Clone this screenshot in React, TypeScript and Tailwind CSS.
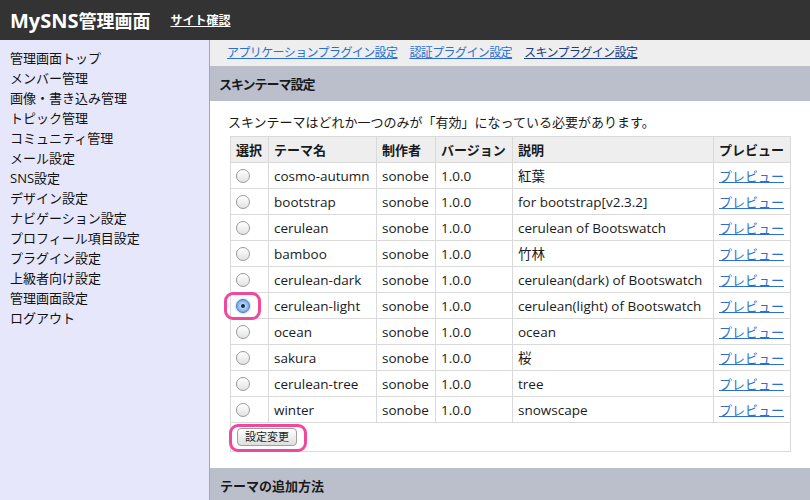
import React from "react";

const F = "font-['Open_Sans','Noto_Sans_CJK_JP',sans-serif]";

const menu = [
  "管理画面トップ",
  "メンバー管理",
  "画像・書き込み管理",
  "トピック管理",
  "コミュニティ管理",
  "メール設定",
  "SNS設定",
  "デザイン設定",
  "ナビゲーション設定",
  "プロフィール項目設定",
  "プラグイン設定",
  "上級者向け設定",
  "管理画面設定",
  "ログアウト",
];

const rows = [
  ["cosmo-autumn", "紅葉"],
  ["bootstrap", "for bootstrap[v2.3.2]"],
  ["cerulean", "cerulean of Bootswatch"],
  ["bamboo", "竹林"],
  ["cerulean-dark", "cerulean(dark) of Bootswatch"],
  ["cerulean-light", "cerulean(light) of Bootswatch"],
  ["ocean", "ocean"],
  ["sakura", "桜"],
  ["cerulean-tree", "tree"],
  ["winter", "snowscape"],
];

function Radio({ checked }: { checked?: boolean }) {
  if (checked) {
    return (
      <span className="relative inline-flex h-[14px] w-[14px] items-center justify-center rounded-full border border-[#4a7fc0] bg-[radial-gradient(circle,#eaf3ff_0%,#9cc4f2_45%,#4d8fe0_100%)] shadow-[0_0_2px_#6aa0e8]">
        <span className="block h-[4px] w-[4px] rounded-full bg-[#1a2a40]" />
      </span>
    );
  }
  return (
    <span className="inline-block h-[14px] w-[14px] rounded-full border border-[#9a9a9a] bg-[linear-gradient(#ffffff,#e2e2e2)] shadow-[inset_0_1px_1px_rgba(255,255,255,0.9)]" />
  );
}

export default function App() {
  const cell = "border border-[#dadada] h-[26px] px-[5px] py-0 align-middle whitespace-nowrap overflow-visible";
  return (
    <div className={`w-[810px] h-[500px] overflow-hidden bg-white text-[13px] text-[#1a1a1a] ${F}`}>
      <header className="flex h-[40px] items-center bg-[#333333] pl-[10px]">
        <h1 className="flex items-baseline font-bold leading-[24px] text-white">
          <span className="text-[20px]">MySNS</span>
          <span className="font-['Noto_Sans_CJK_JP',sans-serif] text-[18px]">管理画面</span>
        </h1>
        <a className="ml-[20px] font-['Noto_Sans_CJK_JP',sans-serif] text-[12px] font-bold leading-[20px] text-white underline">サイト確認</a>
      </header>
      <div className="flex h-[460px]">
        <aside className="w-[210px] shrink-0 border-r border-[#9c9cf0] bg-[#e7e7fb] pl-[10px] pt-[8px]">
          {menu.map((m) => (
            <div key={m} className="leading-[20px] text-[13px] text-[#111]">
              {m}
            </div>
          ))}
        </aside>
        <main className="flex w-[600px] flex-col">
          <nav className="flex h-[26px] shrink-0 items-center gap-[12px] bg-[#eeeeee] pl-[17px] text-[12px] leading-[18px] tracking-[-0.6px]">
            <a className="text-[#2b6fd0] underline">アプリケーションプラグイン設定</a>
            <a className="text-[#2b6fd0] underline">認証プラグイン設定</a>
            <a className="text-[#1c3c86] underline">スキンプラグイン設定</a>
          </nav>
          <div className="flex h-[35px] shrink-0 items-center bg-[#bbbfcb] pl-[9px] text-[13px] font-bold leading-[20px] tracking-[-1px]">
            スキンテーマ設定
          </div>
          <div className="shrink-0 pl-[18px] pr-[20px] pt-[11px]">
            <p className="leading-[20px]">スキンテーマはどれか一つのみが「有効」になっている必要があります。</p>
            <table className="ml-[2px] mt-[4px] w-[560px] table-fixed border-collapse border border-[#dadada] leading-[18px]">
              <colgroup>
                <col className="w-[38px]" />
                <col className="w-[108px]" />
                <col className="w-[59px]" />
                <col className="w-[77px]" />
                <col className="w-[201px]" />
                <col className="w-[77px]" />
              </colgroup>
              <thead>
                <tr className="bg-[#eeeeee] font-bold">
                  <th className={`${cell} text-left`}>選択</th>
                  <th className={`${cell} text-left`}>テーマ名</th>
                  <th className={`${cell} text-left`}>制作者</th>
                  <th className={`${cell} text-left`}>バージョン</th>
                  <th className={`${cell} text-left`}>説明</th>
                  <th className={`${cell} text-left`}>プレビュー</th>
                </tr>
              </thead>
              <tbody className="text-[13.5px]">
                {rows.map(([name, desc]) => {
                  const sel = name === "cerulean-light";
                  return (
                    <tr key={name}>
                      <td className={`${cell} relative`}>
                        <span className="flex items-center">
                          <Radio checked={sel} />
                        </span>
                        {sel && (
                          <span className="absolute left-[-7px] top-[-1px] h-[28px] w-[37px] rounded-[9px] border-[3px] border-[#f0489a]" />
                        )}
                      </td>
                      <td className={cell}>{name}</td>
                      <td className={cell}>sonobe</td>
                      <td className={cell}>1.0.0</td>
                      <td className={cell}>{desc}</td>
                      <td className={`${cell} text-[13px]`}>
                        <a className="text-[#2b6fd0] underline">プレビュー</a>
                      </td>
                    </tr>
                  );
                })}
                <tr>
                  <td colSpan={6} className="relative h-[29px] border border-[#dadada] px-[6px] py-0 align-middle">
                    <button className="flex h-[18px] w-[60px] items-center justify-center rounded-[4px] border border-[#a0a0a0] bg-[linear-gradient(#ffffff,#dedede)] text-[11px] leading-[14px] text-[#222]">
                      設定変更
                    </button>
                    <span className="absolute left-[-2px] top-[1px] h-[28px] w-[78px] rounded-[9px] border-[3px] border-[#f0489a]" />
                  </td>
                </tr>
              </tbody>
            </table>
          </div>
          <div className="mt-[16px] flex h-[35px] shrink-0 items-center bg-[#bbbfcb] pl-[10px] text-[13px] font-bold leading-[20px]">
            テーマの追加方法
          </div>
        </main>
      </div>
    </div>
  );
}
